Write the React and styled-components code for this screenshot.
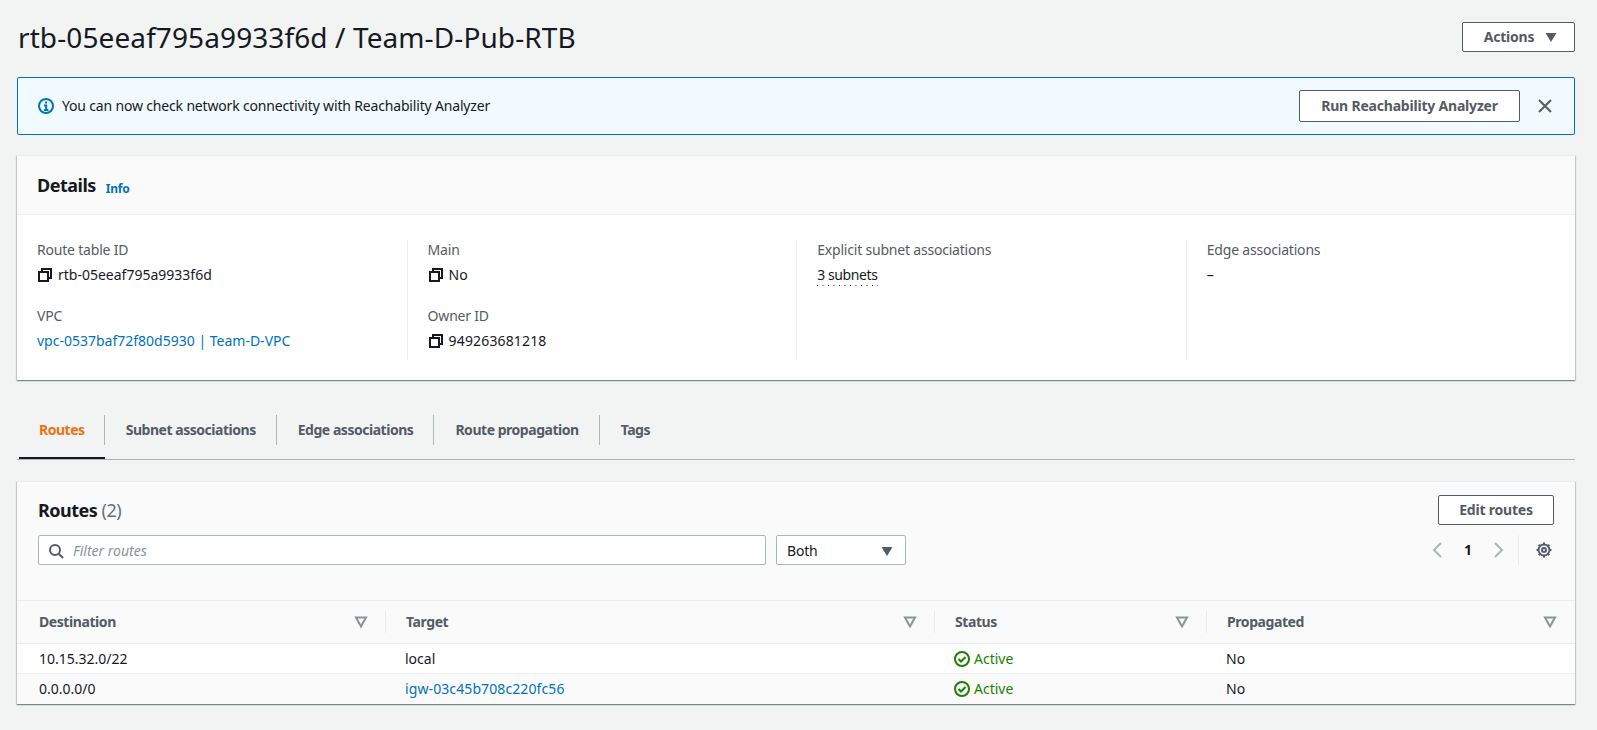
import React from "react";
import styled, { createGlobalStyle } from "styled-components";

const Global = createGlobalStyle`
  html, body { margin: 0; padding: 0; background: #f2f3f3; }
  body { font-family: "Noto Sans", "Open Sans", sans-serif; font-size: 14px; line-height: 20px; color: #16191f; }
  * { box-sizing: border-box; }
`;

const Page = styled.div`
  width: 1597px;
  height: 730px;
  padding: 22px 22px 0 17px;
  overflow: hidden;
`;
const HeaderRow = styled.div`
  display: flex;
  justify-content: space-between;
  align-items: center;
  height: 30px;
  margin-bottom: 25px;
`;
const Title = styled.h1`
  margin: 0 0 0 1px;
  font-size: 28px;
  line-height: 30px;
  font-weight: 400;
  letter-spacing: 0.1px;
  color: #16191f;
`;
const Button = styled.button`
  display: inline-flex;
  align-items: center;
  justify-content: center;
  width: ${(p) => p.$w}px;
  height: ${(p) => p.$h}px;
  padding: 0;
  background: #fff;
  border: 1px solid #545b64;
  border-radius: 2px;
  color: #545b64;
  font-family: inherit;
  font-size: 14px;
  font-weight: 700;
  line-height: 20px;
  letter-spacing: -0.2px;
  white-space: nowrap;
`;
const ActionsButton = styled(Button)`
  gap: 9px;
  padding-left: 6px;
`;
const Caret = styled.svg`
  width: 16px;
  height: 16px;
  fill: currentColor;
  color: ${(p) => p.$color || "#545b64"};
`;
const Flash = styled.div`
  display: flex;
  align-items: center;
  height: 58px;
  padding: 0 21px 0 20px;
  background: #f1faff;
  border: 1px solid #0073bb;
  border-radius: 2px;
  margin-bottom: 20px;
`;
const FlashMsg = styled.div`
  flex: 1;
  display: flex;
  align-items: center;
  gap: 8px;
  letter-spacing: -0.17px;
  color: #16191f;
`;
const CloseBtn = styled.span`
  display: inline-flex;
  margin-left: 17px;
  color: #545b64;
`;
const Card = styled.section`
  background: #fff;
  border-top: 1px solid #eaeded;
  box-shadow: 0 1px 1px 0 rgba(0, 28, 36, 0.3), 1px 1px 1px 0 rgba(0, 28, 36, 0.15), -1px 1px 1px 0 rgba(0, 28, 36, 0.15);
`;
const DetailsHead = styled.div`
  display: flex;
  align-items: center;
  height: 59px;
  padding: 0 20px;
  background: #fafafa;
  border-bottom: 1px solid #eaeded;
`;
const CardTitle = styled.h2`
  margin: 0;
  font-size: 18px;
  line-height: 22px;
  font-weight: 700;
  letter-spacing: -0.5px;
  color: #16191f;
`;
const InfoLink = styled.a`
  margin-left: 10px;
  margin-top: 8px;
  font-size: 12px;
  font-weight: 700;
  letter-spacing: -0.25px;
  color: #0073bb;
`;
const DetailGrid = styled.div`
  display: grid;
  grid-template-columns: repeat(4, 389.6px);
  padding: 25px 0 20px 0;
  height: 165px;
`;
const DetailCol = styled.div`
  display: flex;
  flex-direction: column;
  gap: 21px;
  padding-left: 20px;
  border-left: ${(p) => (p.$first ? "none" : "1px solid #eaeded")};
`;
const Field = styled.div`
  display: flex;
  flex-direction: column;
  gap: 5px;
`;
const Label = styled.div`
  letter-spacing: -0.2px;
  color: #545b64;
`;
const Value = styled.div`
  display: flex;
  align-items: center;
  gap: 5px;
  letter-spacing: ${(p) => p.$ls || 0}px;
  color: #16191f;
`;
const Link = styled.a`
  letter-spacing: ${(p) => p.$ls || 0}px;
  color: #0073bb;
`;
const Dotted = styled.span`
  display: inline-block;
  height: 21px;
  line-height: 19px;
  letter-spacing: -0.4px;
  background: linear-gradient(to right, #16191f 1px, transparent 1px) left bottom / 5.5px 1px repeat-x;
`;
const CopySvg = styled.svg`
  width: 16px;
  height: 16px;
  fill: none;
  stroke: #16191f;
  stroke-width: 2;
  flex: none;
`;
const TabBar = styled.div`
  display: flex;
  height: 45px;
  margin: 35px 0 21px;
  border-bottom: 1px solid #aab7b8;
`;
const Tab = styled.div`
  position: relative;
  height: 44px;
  margin-left: ${(p) => (p.$first ? 2 : 0)}px;
  padding: 0 ${(p) => (p.$first ? 20 : 21)}px 0 ${(p) => (p.$first ? 20 : 21)}px;
  line-height: 29px;
  font-weight: 700;
  letter-spacing: -0.47px;
  color: ${(p) => (p.$active ? "#ec7211" : "#545b64")};
  border-bottom: ${(p) => (p.$active ? "2px solid #16191f" : "none")};
  &::after {
    content: "";
    display: ${(p) => (p.$last ? "none" : "block")};
    position: absolute;
    right: 0;
    top: 0;
    width: 1px;
    height: 30px;
    background: #aab7b8;
  }
`;
const RoutesHead = styled.div`
  background: #fafafa;
  height: 119px;
  padding: 13px 21px 0 21px;
  border-bottom: 1px solid #eaeded;
`;
const TitleRow = styled.div`
  display: flex;
  justify-content: space-between;
  align-items: flex-start;
  height: 40px;
`;
const RoutesTitle = styled(CardTitle)`
  margin-top: 4px;
`;
const Count = styled.span`
  color: #687078;
  font-weight: 400;
`;
const FilterRow = styled.div`
  display: flex;
  align-items: center;
  margin-right: 2px;
`;
const FilterInput = styled.div`
  display: flex;
  align-items: center;
  gap: 9px;
  width: 728px;
  height: 30px;
  padding: 1px 0 0 9px;
  background: #fff;
  border: 1px solid #aab7b8;
  border-radius: 2px;
  color: #879596;
  font-style: italic;
  font-size: 14px;
`;
const Select = styled.div`
  display: flex;
  align-items: center;
  justify-content: space-between;
  width: 130px;
  height: 30px;
  margin-left: 10px;
  padding: 1px 10px 0;
  background: #fff;
  border: 1px solid #aab7b8;
  border-radius: 2px;
  letter-spacing: -0.2px;
  color: #16191f;
`;
const Pager = styled.div`
  display: flex;
  align-items: center;
  margin-left: auto;
  height: 30px;
`;
const PageNum = styled.span`
  width: 44px;
  text-align: center;
  font-weight: 700;
`;
const PagerDivider = styled.span`
  width: 1px;
  height: 30px;
  background: #eaeded;
  margin: 0 17px 0 12px;
`;
const Row = styled.div`
  display: grid;
  grid-template-columns: 369px 549px 272px 1fr;
  align-items: center;
  height: ${(p) => p.$h}px;
  background: ${(p) => p.$bg};
  border-bottom: ${(p) => (p.$plain ? "none" : "1px solid #eaeded")};
`;
const HeadCell = styled.div`
  position: relative;
  display: flex;
  align-items: center;
  justify-content: space-between;
  height: 22px;
  padding: 0 17px 0 ${(p) => (p.$first ? 22 : 20)}px;
  color: #545b64;
  font-weight: 700;
  font-size: 14px;
  letter-spacing: -0.42px;
  &::after {
    content: "";
    display: ${(p) => (p.$last ? "none" : "block")};
    position: absolute;
    right: 0;
    top: 0;
    width: 1px;
    height: 22px;
    background: #eaeded;
  }
`;
const Cell = styled.div`
  display: flex;
  align-items: center;
  gap: 4px;
  padding-left: ${(p) => (p.$first ? 22 : 19)}px;
  color: #16191f;
`;
const Success = styled.span`
  color: #1d8102;
`;
const SvgLine = styled.svg`
  width: 16px;
  height: 16px;
  fill: none;
  stroke: ${(p) => p.$color};
  stroke-width: 2;
  flex: none;
`;

const Copy = () => (
  <CopySvg viewBox="0 0 16 16"><path d="M2 5h9v9H2z" /><path d="M5 5V2h9v9h-3" /></CopySvg>
);
const SortIcon = () => (
  <SvgLine viewBox="0 0 16 16" $color="#879596"><path d="M3 3.500h10L8 12.500z" /></SvgLine>
);
const Status = () => (
  <Cell>
    <SvgLine viewBox="0 0 16 16" $color="#1d8102"><circle cx="8" cy="8" r="7" /><path d="M4.500 8l2.500 2.500 4.500-4.500" /></SvgLine>
    <Success>Active</Success>
  </Cell>
);
const Gear = () => (
  <SvgLine viewBox="0 0 16 16" $color="#545b64">
    <circle cx="8" cy="8" r="2" />
    <circle cx="8" cy="8" r="5.500" />
    <path d="M8 .500v2.500M8 13v2.500M.500 8H3M13 8h2.500M2.700 2.700l1.800 1.800M11.500 11.500l1.800 1.800M13.300 2.700l-1.800 1.800M4.500 11.500l-1.800 1.800" />
  </SvgLine>
);

export default function App() {
  return (
    <Page>
      <Global />
      <HeaderRow>
        <Title>rtb-05eeaf795a9933f6d / Team-D-Pub-RTB</Title>
        <ActionsButton $w={113} $h={30}>
          Actions
          <Caret viewBox="0 0 16 16"><path d="M2.500 4h11L8 13z" /></Caret>
        </ActionsButton>
      </HeaderRow>
      <Flash>
        <FlashMsg>
          <SvgLine viewBox="0 0 16 16" $color="#0073bb">
            <circle cx="8" cy="8" r="7" />
            <path d="M6 7.500h2.200V12M6 12h4.500M8 3.500v2" />
          </SvgLine>
          You can now check network connectivity with Reachability Analyzer
        </FlashMsg>
        <Button $w={221} $h={32}>Run Reachability Analyzer</Button>
        <CloseBtn>
          <SvgLine viewBox="0 0 16 16" $color="#545b64"><path d="M2 2l12 12M14 2L2 14" /></SvgLine>
        </CloseBtn>
      </Flash>
      <Card>
        <DetailsHead>
          <CardTitle>Details</CardTitle>
          <InfoLink>Info</InfoLink>
        </DetailsHead>
        <DetailGrid>
          <DetailCol $first>
            <Field><Label>Route table ID</Label><Value><Copy />rtb-05eeaf795a9933f6d</Value></Field>
            <Field><Label>VPC</Label><Value><Link>vpc-0537baf72f80d5930 | Team-D-VPC</Link></Value></Field>
          </DetailCol>
          <DetailCol>
            <Field><Label>Main</Label><Value><Copy />No</Value></Field>
            <Field><Label>Owner ID</Label><Value $ls={0.15}><Copy />949263681218</Value></Field>
          </DetailCol>
          <DetailCol>
            <Field><Label>Explicit subnet associations</Label><Value><Dotted>3 subnets</Dotted></Value></Field>
          </DetailCol>
          <DetailCol>
            <Field><Label>Edge associations</Label><Value>–</Value></Field>
          </DetailCol>
        </DetailGrid>
      </Card>
      <TabBar>
        <Tab $first $active>Routes</Tab>
        <Tab>Subnet associations</Tab>
        <Tab>Edge associations</Tab>
        <Tab>Route propagation</Tab>
        <Tab $last>Tags</Tab>
      </TabBar>
      <Card>
        <RoutesHead>
          <TitleRow>
            <RoutesTitle>Routes <Count>(2)</Count></RoutesTitle>
            <Button $w={116} $h={30}>Edit routes</Button>
          </TitleRow>
          <FilterRow>
            <FilterInput>
              <SvgLine viewBox="0 0 16 16" $color="#545b64"><circle cx="7" cy="7" r="5" /><path d="M11 11l4 4" /></SvgLine>
              Filter routes
            </FilterInput>
            <Select>
              Both
              <Caret viewBox="0 0 16 16"><path d="M2.500 4h11L8 13z" /></Caret>
            </Select>
            <Pager>
              <SvgLine viewBox="0 0 16 16" $color="#aab7b8"><path d="M11 1L4 8l7 7" /></SvgLine>
              <PageNum>1</PageNum>
              <SvgLine viewBox="0 0 16 16" $color="#aab7b8"><path d="M5 1l7 7-7 7" /></SvgLine>
              <PagerDivider />
              <Gear />
            </Pager>
          </FilterRow>
        </RoutesHead>
        <Row $h={43} $bg="#fafafa">
          <HeadCell $first>Destination<SortIcon /></HeadCell>
          <HeadCell>Target<SortIcon /></HeadCell>
          <HeadCell>Status<SortIcon /></HeadCell>
          <HeadCell $last>Propagated<SortIcon /></HeadCell>
        </Row>
        <Row $h={30} $bg="#fff">
          <Cell $first>10.15.32.0/22</Cell>
          <Cell>local</Cell>
          <Status />
          <Cell>No</Cell>
        </Row>
        <Row $h={30} $bg="#fafafa" $plain>
          <Cell $first>0.0.0.0/0</Cell>
          <Cell><Link $ls={0.1}>igw-03c45b708c220fc56</Link></Cell>
          <Status />
          <Cell>No</Cell>
        </Row>
      </Card>
    </Page>
  );
}
